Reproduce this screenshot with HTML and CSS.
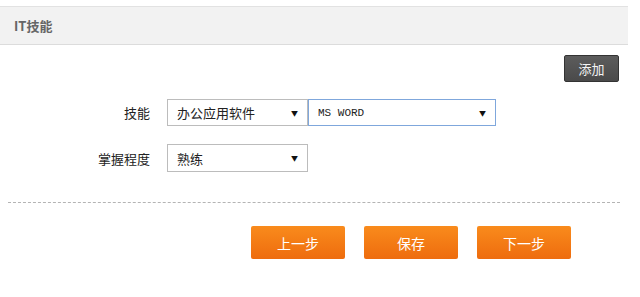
FILE: index.html
```html
<!DOCTYPE html>
<html lang="zh-CN">
<head>
  <meta charset="UTF-8">
  <title>IT技能</title>
  <link rel="stylesheet" href="styles.css">
</head>
<body>
  <div class="panel-head">IT技能</div>

  <div class="toolbar">
    <button class="add-button">添加</button>
  </div>

  <div class="form">
    <div class="form-row">
      <label class="form-label">技能</label>
      <div class="select select-type">
        <span class="select-text">办公应用软件</span>
        <span class="select-arrow">▼</span>
      </div>
      <div class="select select-name is-focus">
        <span class="select-text mono">MS WORD</span>
        <span class="select-arrow">▼</span>
      </div>
    </div>
    <div class="form-row">
      <label class="form-label">掌握程度</label>
      <div class="select select-type tall">
        <span class="select-text">熟练</span>
        <span class="select-arrow">▼</span>
      </div>
    </div>
  </div>

  <div class="divider"></div>

  <div class="actions">
    <button class="action-button">上一步</button>
    <button class="action-button">保存</button>
    <button class="action-button">下一步</button>
  </div>
</body>
</html>
```

FILE: styles.css
```css
* {
  margin: 0;
  padding: 0;
  box-sizing: border-box;
}

body {
  font-family: "Noto Sans CJK SC", "Liberation Sans", sans-serif;
  font-size: 13px;
  color: #333;
  background: #fff;
  width: 640px;
}

.panel-head {
  margin-top: 6px;
  width: 628px;
  height: 39px;
  line-height: 37px;
  padding-left: 14px;
  background: #f2f2f2;
  border-top: 1px solid #e2e2e2;
  border-bottom: 1px solid #dcdcdc;
  font-weight: bold;
  color: #666;
}

.toolbar {
  display: flex;
  justify-content: flex-end;
  padding-right: 21px;
  margin-top: 10px;
}

.add-button {
  width: 55px;
  height: 27px;
  background: linear-gradient(#5c5c5c, #4a4a4a);
  border: 1px solid #333;
  border-radius: 2px;
  color: #f4f4f4;
  font-family: inherit;
  font-size: 13px;
}

.form {
  margin-top: 17px;
  display: flex;
  flex-direction: column;
  gap: 18px;
}

.form-row {
  display: flex;
  align-items: center;
}

.form-label {
  width: 150px;
  text-align: right;
  margin-right: 17px;
  color: #222;
}

.select {
  display: flex;
  align-items: center;
  justify-content: space-between;
  height: 27px;
  padding: 0 9px 0 9px;
  border: 1px solid #bcbcbc;
  background: #fff;
}

.select-type {
  width: 141px;
}

.select-name {
  width: 188px;
}

.tall {
  height: 28px;
}

.is-focus {
  border-color: #7fa7dc;
}

.select-text {
  color: #222;
}

.mono {
  font-family: "Liberation Mono", monospace;
  font-size: 11px;
}

.select-arrow {
  font-size: 7px;
  color: #111;
}

.divider {
  margin: 30px 0 0 8px;
  width: 612px;
  border-top: 1px dashed #b4b4b4;
}

.actions {
  display: flex;
  gap: 19px;
  padding-left: 251px;
  margin-top: 23px;
}

.action-button {
  width: 94px;
  height: 33px;
  border: none;
  border-radius: 2px;
  background: linear-gradient(#f98b1c, #ee6c0e);
  color: #fff;
  font-family: inherit;
  font-size: 14px;
}
```
